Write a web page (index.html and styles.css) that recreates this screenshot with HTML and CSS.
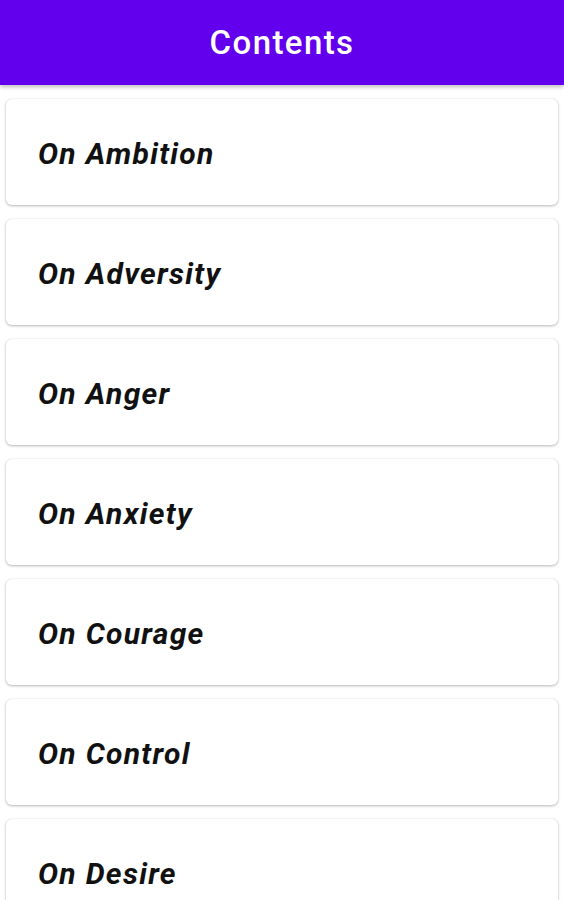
FILE: index.html
```html
<!DOCTYPE html>
<html lang="en">
<head>
    <meta charset="UTF-8">
    <meta name="viewport" content="width=device-width, initial-scale=1.0">
    <title>Contents</title>
    <link rel="stylesheet" href="styles.css">
</head>
<body>
    <header class="app-bar">
        <h1>Contents</h1>
    </header>

    <main class="topic-list">
        <div class="topic-card"><span>On Ambition</span></div>
        <div class="topic-card"><span>On Adversity</span></div>
        <div class="topic-card"><span>On Anger</span></div>
        <div class="topic-card"><span>On Anxiety</span></div>
        <div class="topic-card"><span>On Courage</span></div>
        <div class="topic-card"><span>On Control</span></div>
        <div class="topic-card"><span>On Desire</span></div>
    </main>
</body>
</html>
```

FILE: styles.css
```css
:root {
    --primary-color: #6200ee;
    --text-color: #111;
}

body {
    font-family: Roboto, 'Liberation Sans', sans-serif;
    color: var(--text-color);
    background-color: #fff;
    margin: 0;
    height: 900px;
    overflow: hidden;
}

.app-bar {
    height: 85px;
    background-color: var(--primary-color);
    display: flex;
    align-items: center;
    justify-content: center;
    box-shadow: 0 2px 4px rgba(0, 0, 0, 0.25);
    position: relative;
    z-index: 1;
}

.app-bar h1 {
    margin: 0;
    color: white;
    font-size: 33px;
    font-weight: 500;
    letter-spacing: 1.4px;
}

.topic-list {
    display: flex;
    flex-direction: column;
    gap: 14px;
    padding: 14px 6px 0 6px;
}

.topic-card {
    height: 106px;
    flex-shrink: 0;
    background: white;
    border-radius: 6px;
    box-shadow: 0 1px 3px rgba(0, 0, 0, 0.28), 0 0 1px rgba(0, 0, 0, 0.15);
    display: flex;
    align-items: center;
    padding-left: 32px;
}

.topic-card span {
    font-size: 30px;
    font-weight: 700;
    font-style: italic;
    letter-spacing: 1.3px;
    padding-top: 2px;
}
```
